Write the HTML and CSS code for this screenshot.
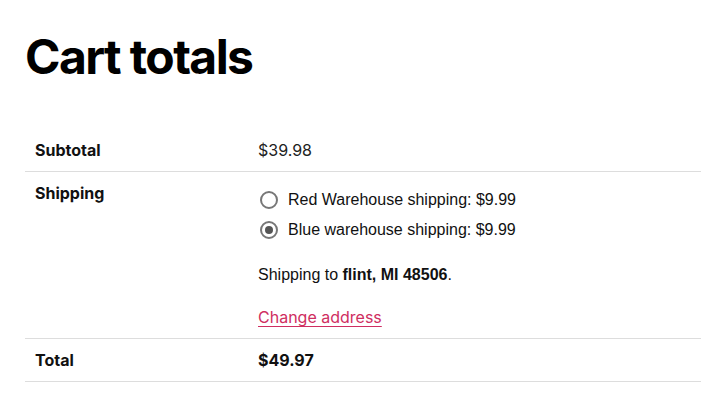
FILE: index.html
```html
<!DOCTYPE html>
<html>
<head>
<meta charset="utf-8">
<link rel="stylesheet" href="styles.css">
</head>
<body>
<div class="cart">
  <h2 class="title">Cart totals</h2>
  <table class="totals">
    <tr class="row-sub">
      <th>Subtotal</th>
      <td class="amount">$39.98</td>
    </tr>
    <tr class="row-ship">
      <th>Shipping</th>
      <td>
        <ul class="methods">
          <li><span class="radio"></span>Red Warehouse shipping: $9.99</li>
          <li><span class="radio checked"></span>Blue warehouse shipping: $9.99</li>
        </ul>
        <p class="dest">Shipping to <strong>flint, MI 48506</strong>.</p>
        <a class="change" href="#">Change address</a>
      </td>
    </tr>
    <tr class="row-total">
      <th>Total</th>
      <td class="grand">$49.97</td>
    </tr>
  </table>
</div>
</body>
</html>
```
FILE: styles.css
```css
html, body { margin: 0; padding: 0; background: #fff; }
body { font-family: "Liberation Sans", Arial, sans-serif; color: #111; }
.cart { padding: 27px 26px 0 25px; }
.title {
  font-family: Inter, sans-serif;
  font-weight: 700;
  font-size: 48px;
  letter-spacing: -1.6px;
  line-height: 60px;
  margin: 0 0 44px 0;
  color: #000;
}
.totals { width: 676px; border-collapse: collapse; table-layout: fixed; }
.totals th {
  font-family: Inter, sans-serif;
  font-weight: 700;
  font-size: 16px;
  text-align: left;
  vertical-align: top;
  width: 203px;
  padding: 12px 10px 11px 10px;
  color: #111;
}
.totals td { vertical-align: top; padding: 12px 10px 11px 10px; font-size: 16px; }
.totals tr { border-bottom: 1px solid #ddd; }
.amount { font-family: Inter, sans-serif; font-size: 16px; color: #222; line-height: 19px; }
.row-sub th { line-height: 19px; padding-top: 10px; }
.row-sub td { padding-top: 10px; }
.row-ship th { line-height: 19px; padding-top: 12px; }
.row-ship td { padding-top: 13px; padding-bottom: 11px; }
.methods { list-style: none; margin: 0; padding: 0; }
.methods li { display: flex; align-items: center; height: 30px; font-size: 16px; color: #111; }
.radio {
  width: 14px; height: 14px; border: 2px solid #777; border-radius: 50%;
  margin: 0 10px 0 2px; box-sizing: content-box; position: relative; flex: none;
}
.radio.checked::after {
  content: ""; position: absolute; left: 3px; top: 3px; width: 8px; height: 8px;
  border-radius: 50%; background: #555;
}
.dest { margin: 20px 0 0 0; line-height: 20px; color: #111; }
.dest strong { font-weight: 700; }
.change {
  display: inline-block; margin-top: 22px; font-family: Inter, sans-serif; font-size: 16px;
  color: #cf2e61; text-decoration: underline; text-underline-offset: 3px; line-height: 20px;
}
.row-total th, .row-total td { padding-top: 12px; padding-bottom: 11px; line-height: 19px; }
.grand { font-family: Inter, sans-serif; font-weight: 700; font-size: 16px; color: #111; }
```
